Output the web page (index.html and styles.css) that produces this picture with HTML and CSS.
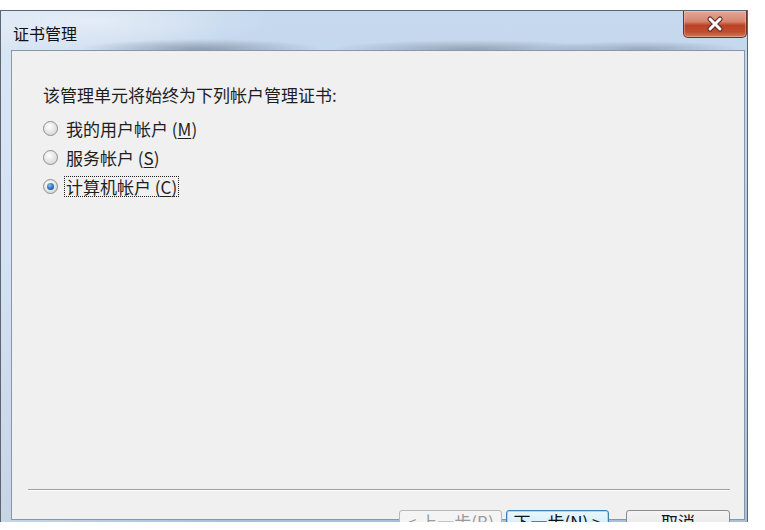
FILE: index.html
```html
<!DOCTYPE html>
<html lang="zh-CN">
<head>
<meta charset="utf-8">
<title>证书管理</title>
<link rel="stylesheet" href="styles.css">
</head>
<body>
<div class="window">
  <div class="titlebar">
    <span class="title">证书管理</span>
    <div class="close">
      <svg width="20" height="16" viewBox="0 0 20 16">
        <path d="M5 3 L15 13 M15 3 L5 13" stroke="#5a2a20" stroke-width="5" stroke-linecap="round" fill="none"/>
        <path d="M5 3 L15 13 M15 3 L5 13" stroke="#ffffff" stroke-width="3" stroke-linecap="round" fill="none"/>
      </svg>
    </div>
  </div>
  <div class="client">
    <div class="content">
      <p class="heading">该管理单元将始终为下列帐户管理证书:</p>
      <div class="radios">
        <div class="row"><span class="radio"></span><span class="label">我的用户帐户 (<u>M</u>)</span></div>
        <div class="row"><span class="radio"></span><span class="label">服务帐户 (<u>S</u>)</span></div>
        <div class="row"><span class="radio checked"></span><span class="label focus">计算机帐户 (<u>C</u>)</span></div>
      </div>
    </div>
    <div class="sep"></div>
    <div class="buttons">
      <div class="btn disabled">&lt; 上一步(<u>B</u>)</div>
      <div class="btn default">下一步(<u>N</u>) &gt;</div>
      <div class="btn cancel">取消</div>
    </div>
  </div>
</div>
</body>
</html>
```
FILE: styles.css
```css
html, body {
  margin: 0;
  padding: 0;
  background: #ffffff;
}
body {
  font-family: "Noto Sans CJK SC", "Noto Sans", sans-serif;
  color: #1a1a1a;
}
.window {
  margin-top: 10px;
  width: 748px;
  height: 512px;
  overflow: hidden;
  border: 1px solid #5d6670;
  border-bottom: none;
  box-sizing: border-box;
  padding: 0 2px 0 10px;
  background:
    linear-gradient(to right, rgba(255,255,255,0.35), rgba(255,255,255,0) 30%),
    linear-gradient(to bottom, #c6d9ee 0%, #bcd3ed 50%, #a9bfd8 100%);
}
.titlebar {
  height: 39px;
  display: flex;
  align-items: flex-start;
  justify-content: space-between;
  position: relative;
  background:
    radial-gradient(ellipse 120px 10px at 200px 38px, rgba(90,100,115,0.5), rgba(90,100,115,0)),
    radial-gradient(ellipse 140px 9px at 470px 38px, rgba(90,100,115,0.45), rgba(90,100,115,0)),
    radial-gradient(ellipse 100px 8px at 640px 38px, rgba(90,100,115,0.4), rgba(90,100,115,0)),
    radial-gradient(ellipse 180px 30px at 90px 10px, rgba(240,244,250,0.6), rgba(240,244,250,0));
  margin-left: -10px;
  padding-left: 12px;
  margin-right: -2px;
}
.title {
  font-size: 16px;
  line-height: 20px;
  margin-top: 12px;
  color: #111;
}
.close {
  width: 64px;
  height: 27px;
  box-sizing: border-box;
  border: 1px solid #6a3226;
  border-top: none;
  border-radius: 0 0 5px 5px;
  background: linear-gradient(to bottom, #e4a898 0%, #d68670 40%, #bc4226 55%, #c04c30 80%, #d07a60 100%);
  display: flex;
  align-items: center;
  justify-content: center;
  box-shadow: inset 0 0 0 1px rgba(255,220,210,0.35);
}
.client {
  height: 470px;
  border: 1px solid #8796a8;
  background: #f0f0f0;
  box-sizing: border-box;
}
.content {
  height: 438px;
  padding: 34px 0 0 31px;
  box-sizing: border-box;
}
.heading {
  margin: 0;
  font-size: 17px;
  line-height: 20px;
  color: #1e1e1e;
}
.radios {
  margin-top: 9px;
}
.row {
  height: 29px;
  display: flex;
  align-items: center;
}
.radio {
  width: 15px;
  height: 15px;
  border-radius: 50%;
  border: 1px solid #8f8f8f;
  background: radial-gradient(circle at 40% 35%, #ffffff 0%, #e8e8e8 45%, #cdcdcd 100%);
  box-sizing: border-box;
  margin-right: 7px;
  position: relative;
  flex: none;
}
.radio.checked::after {
  content: "";
  position: absolute;
  left: 3px;
  top: 3px;
  width: 7px;
  height: 7px;
  border-radius: 50%;
  background: radial-gradient(circle at 40% 35%, #8ec0f0 0%, #2a6cc0 55%, #1a3f80 100%);
}
.label {
  font-size: 17px;
  line-height: 19px;
  color: #1e1e1e;
  padding: 0 1px;
}
.label u {
  text-decoration: underline;
  text-underline-offset: 2px;
}
.label.focus {
  outline: 1px dotted #202020;
  outline-offset: 0;
}
.sep {
  height: 0;
  border-top: 1px solid #a0a0a0;
  border-bottom: 1px solid #ffffff;
  margin: 0 14px 0 16px;
}
.buttons {
  display: flex;
  justify-content: flex-end;
  margin-top: 19px;
  padding-right: 14px;
}
.btn {
  height: 23px;
  box-sizing: border-box;
  width: 103px;
  border: 1px solid #8c8c8c;
  border-radius: 3px;
  background: linear-gradient(to bottom, #f4f4f4 0%, #ececec 50%, #dcdcdc 51%, #d4d4d4 100%);
  font-size: 17px;
  line-height: 22px;
  text-align: center;
  color: #111;
}
.btn.disabled {
  color: #9a9a9a;
  border-color: #b8b8b8;
  background: #f4f4f4;
  margin-right: 4px;
}
.btn.default {
  border-color: #3c7fb1;
  box-shadow: inset 0 0 0 1px #a8d8f6;
  background: linear-gradient(to bottom, #eaf6fd 0%, #d9f0fc 50%, #bee6fd 51%, #a7d9f5 100%);
  margin-right: 17px;
}
.btn.cancel {
  width: 104px;
}
```
